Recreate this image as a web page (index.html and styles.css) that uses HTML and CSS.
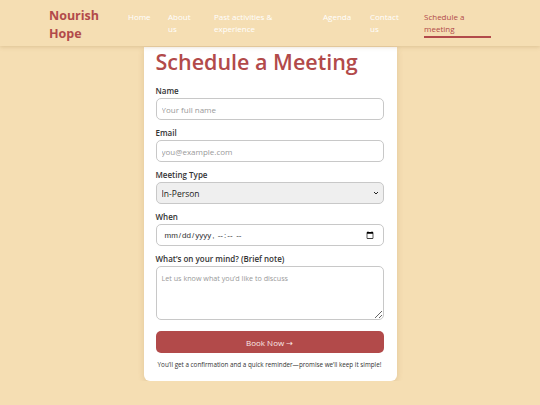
FILE: index.html
```html
<!DOCTYPE html>
<html lang="en">
<head>
<meta charset="utf-8">
<title>Schedule a Meeting</title>
<link rel="stylesheet" href="styles.css">
</head>
<body>
<header class="site-header">
  <div class="logo">Nourish<br>Hope</div>
  <nav class="nav">
    <a class="nav-link w-home" href="#">Home</a>
    <a class="nav-link w-about" href="#">About us</a>
    <a class="nav-link w-past" href="#">Past activities &amp; experience</a>
    <a class="nav-link w-agenda" href="#">Agenda</a>
    <a class="nav-link w-contact" href="#">Contact us</a>
    <a class="nav-link w-sched active" href="#">Schedule a meeting</a>
  </nav>
</header>
<main class="page">
  <form class="card">
    <h1 class="title">Schedule a Meeting</h1>
    <label class="field">
      <span class="label">Name</span>
      <input class="control" type="text" placeholder="Your full name">
    </label>
    <label class="field">
      <span class="label">Email</span>
      <input class="control" type="email" placeholder="you@example.com">
    </label>
    <label class="field">
      <span class="label">Meeting Type</span>
      <span class="select-wrap">
        <select class="control select">
          <option>In-Person</option>
          <option>Online</option>
        </select>
        <svg class="chev" width="6" height="4" viewBox="0 0 6 4"><path d="M1 1l2 2 2-2" fill="none" stroke="#222" stroke-width="1"/></svg>
      </span>
    </label>
    <label class="field">
      <span class="label">When</span>
      <input class="control date" type="datetime-local">
    </label>
    <label class="field">
      <span class="label">What’s on your mind? (Brief note)</span>
      <textarea class="control area" placeholder="Let us know what you’d like to discuss"></textarea>
    </label>
    <button class="btn" type="button">Book Now →</button>
    <p class="note">You’ll get a confirmation and a quick reminder—promise we’ll keep it simple!</p>
  </form>
</main>
</body>
</html>
```

FILE: styles.css
```css
* { box-sizing: border-box; }
html, body { margin: 0; padding: 0; }
body {
  background: #f5deb3;
  font-family: "Open Sans", "DejaVu Sans", sans-serif;
  color: #333;
}
.site-header {
  position: relative;
  z-index: 2;
  height: 46px;
  background: #f5deb3;
  box-shadow: 0 1px 4px rgba(150, 110, 60, 0.25);
  display: flex;
  align-items: flex-start;
  padding-left: 49px;
}
.logo {
  width: 79px;
  padding-top: 7px;
  font-size: 12.5px;
  line-height: 18px;
  font-weight: 700;
  color: #b24a4a;
}
.nav {
  display: flex;
  gap: 18px;
  padding-top: 11px;
}
.nav-link {
  display: block;
  font-size: 8px;
  line-height: 12px;
  color: #fff;
  text-decoration: none;
  padding-bottom: 1px;
}
.w-home { width: 22px; }
.w-about { width: 28px; }
.w-past { width: 91px; }
.w-agenda { width: 29px; }
.w-contact { width: 36px; }
.w-sched { width: 67px; }
.nav-link.active {
  color: #b24a4a;
  border-bottom: 2px solid #b24a4a;
}
.page {
  display: flex;
  justify-content: center;
  padding-top: 1px;
}
.card {
  width: 253px;
  background: #fff;
  border-radius: 0 0 6px 6px;
  box-shadow: 0 2px 6px rgba(150, 110, 60, 0.2);
  padding: 1px 13px 12px 12px;
  display: flex;
  flex-direction: column;
}
.title {
  margin: 0 0 10px;
  font-size: 21.5px;
  line-height: 28px;
  font-weight: 600;
  color: #b24a4a;
}
.field {
  display: flex;
  flex-direction: column;
  margin-bottom: 8px;
}
.label {
  font-size: 8px;
  line-height: 10px;
  font-weight: 600;
  color: #333;
  margin-bottom: 2px;
}
.control {
  width: 228px;
  height: 22px;
  border: 1px solid #c8c8c8;
  border-radius: 5px;
  padding: 0 5px;
  font-family: "Open Sans", "DejaVu Sans", sans-serif;
  font-size: 8px;
  color: #333;
  background: #fff;
}
.control::placeholder { color: #999; }
.select-wrap {
  position: relative;
  display: block;
}
.select {
  appearance: none;
  -webkit-appearance: none;
  background: #efefef;
  padding: 0 5px;
  font-size: 8.5px;
  color: #222;
  display: block;
}
.chev {
  position: absolute;
  right: 5px;
  top: 9px;
  pointer-events: none;
}
.date {
  font-family: "Liberation Sans", "Open Sans", sans-serif;
  font-size: 8px;
  padding: 0 7px;
}
.area {
  height: 54px;
  padding: 6px 5px;
  font-size: 7.2px;
  resize: vertical;
}
.btn {
  margin-top: 3px;
  width: 228px;
  height: 22px;
  border: none;
  border-radius: 5px;
  background: #b24a4a;
  color: #fbe9e6;
  font-family: "Open Sans", "DejaVu Sans", sans-serif;
  font-size: 8px;
}
.note {
  margin: 7px 0 0;
  font-size: 6.3px;
  line-height: 9px;
  color: #333;
  text-align: center;
}
```
